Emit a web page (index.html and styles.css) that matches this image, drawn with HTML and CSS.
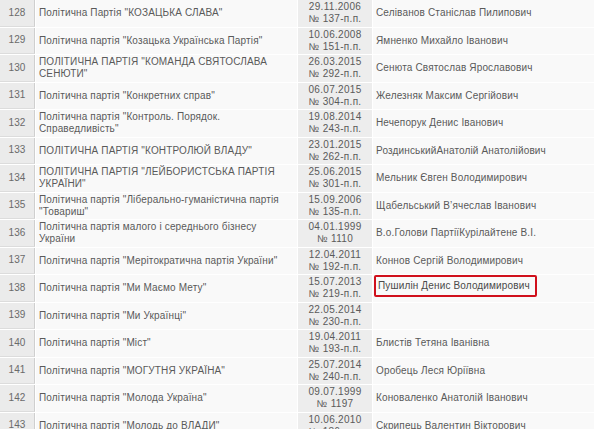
FILE: index.html
```html
<!DOCTYPE html>
<html lang="uk">
<head>
    <meta charset="UTF-8">
    <meta name="viewport" content="width=device-width, initial-scale=1.0">
    <title>Реєстр політичних партій</title>
    <link rel="stylesheet" href="styles.css">
</head>
<body>

<table class="parties">
    <colgroup>
        <col class="col-num">
        <col class="col-name">
        <col class="col-date">
        <col class="col-head">
    </colgroup>
    <tr>
        <td class="num">128</td>
        <td>Політична Партія "КОЗАЦЬКА СЛАВА"</td>
        <td class="date">29.11.2006<br>№ 137-п.п.</td>
        <td>Селіванов Станіслав Пилипович</td>
    </tr>
    <tr>
        <td class="num">129</td>
        <td>Політична партія "Козацька Українська Партія"</td>
        <td class="date">10.06.2008<br>№ 151-п.п.</td>
        <td>Ямненко Михайло Іванович</td>
    </tr>
    <tr>
        <td class="num">130</td>
        <td>ПОЛІТИЧНА ПАРТІЯ "КОМАНДА СВЯТОСЛАВА СЕНЮТИ"</td>
        <td class="date">26.03.2015<br>№ 292-п.п.</td>
        <td>Сенюта Святослав Ярославович</td>
    </tr>
    <tr>
        <td class="num">131</td>
        <td>Політична партія "Конкретних справ"</td>
        <td class="date">06.07.2015<br>№ 304-п.п.</td>
        <td>Железняк Максим Сергійович</td>
    </tr>
    <tr>
        <td class="num">132</td>
        <td>Політична партія "Контроль. Порядок. Справедливість"</td>
        <td class="date">19.08.2014<br>№ 243-п.п.</td>
        <td>Нечепорук Денис Іванович</td>
    </tr>
    <tr>
        <td class="num">133</td>
        <td>ПОЛІТИЧНА ПАРТІЯ "КОНТРОЛЮЙ ВЛАДУ"</td>
        <td class="date">23.01.2015<br>№ 262-п.п.</td>
        <td>РоздинськийАнатолій Анатолійович</td>
    </tr>
    <tr>
        <td class="num">134</td>
        <td>ПОЛІТИЧНА ПАРТІЯ "ЛЕЙБОРИСТСЬКА ПАРТІЯ УКРАЇНИ"</td>
        <td class="date">25.06.2015<br>№ 301-п.п.</td>
        <td>Мельник Євген Володимирович</td>
    </tr>
    <tr>
        <td class="num">135</td>
        <td>Політична партія "Ліберально-гуманістична партія "Товариш"</td>
        <td class="date">15.09.2006<br>№ 135-п.п.</td>
        <td>Щабельський В’ячеслав Іванович</td>
    </tr>
    <tr>
        <td class="num">136</td>
        <td>Політична партія малого і середнього бізнесу<br>України</td>
        <td class="date">04.01.1999<br>№ 1110</td>
        <td>В.о.Голови ПартіїКурілайтене В.І.</td>
    </tr>
    <tr>
        <td class="num">137</td>
        <td>Політична партія "Мерітократична партія України"</td>
        <td class="date">12.04.2011<br>№ 192-п.п.</td>
        <td>Коннов Сергій Володимирович</td>
    </tr>
    <tr>
        <td class="num">138</td>
        <td>Політична партія "Ми Маємо Мету"</td>
        <td class="date">15.07.2013<br>№ 219-п.п.</td>
        <td><span class="marked">Пушилін Денис Володимирович</span></td>
    </tr>
    <tr>
        <td class="num">139</td>
        <td>Політична партія "Ми Українці"</td>
        <td class="date">22.05.2014<br>№ 230-п.п.</td>
        <td></td>
    </tr>
    <tr>
        <td class="num">140</td>
        <td>Політична партія "Міст"</td>
        <td class="date">19.04.2011<br>№ 193-п.п.</td>
        <td>Блистів Тетяна Іванівна</td>
    </tr>
    <tr>
        <td class="num">141</td>
        <td>Політична партія "МОГУТНЯ УКРАЇНА"</td>
        <td class="date">25.07.2014<br>№ 240-п.п.</td>
        <td>Оробець Леся Юріївна</td>
    </tr>
    <tr>
        <td class="num">142</td>
        <td>Політична партія "Молода Україна"</td>
        <td class="date">09.07.1999<br>№ 1197</td>
        <td>Коноваленко Анатолій Іванович</td>
    </tr>
    <tr>
        <td class="num">143</td>
        <td>Політична партія "Молодь до ВЛАДИ"</td>
        <td class="date">10.06.2010<br>№ 186-п.п.</td>
        <td>Скрипець Валентин Вікторович</td>
    </tr>
</table>

</body>
</html>
```

FILE: styles.css
```css
* {
    font-family: "Liberation Sans", Arial, sans-serif;
}

body {
    margin: 0;
    background-color: #ffffff;
}

.parties {
    width: 596px;
    table-layout: fixed;
    border-collapse: separate;
    border-spacing: 1px;
    margin-top: -1px;
    margin-left: -1px;
    font-size: 10px;
    letter-spacing: 0.15px;
    color: #5a5a5a;
}

.col-num {
    width: 35px;
}

.col-name {
    width: 261px;
}

.col-date {
    width: 74px;
}

.parties td {
    height: 26.5px;
    padding: 0 3px;
    line-height: 12px;
    background-color: #f9f9f9;
    vertical-align: middle;
}

.parties td.num {
    padding: 0;
    text-align: center;
    background-color: #ebebeb;
    border-right: 1px solid #cfcfcf;
    border-bottom: 1px solid #dcdcdc;
    height: 25.5px;
    color: #6a6a6a;
}

.parties td.date {
    padding: 0;
    text-align: center;
    background-color: #ededed;
    letter-spacing: 0.3px;
}

.marked {
    display: inline-block;
    margin-left: -2px;
    margin-bottom: 4px;
    padding: 3px 5px 3px 2px;
    border: 2px solid #d0101c;
    border-radius: 2px;
    color: #4a4a4a;
}
```
